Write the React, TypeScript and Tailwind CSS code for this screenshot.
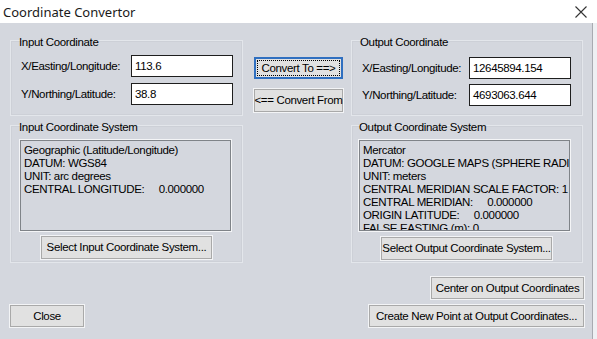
import type { ReactNode } from 'react'

const ui = "font-['Liberation_Sans',Arial,sans-serif] text-[11.5px] tracking-[-0.35px] leading-[13px] text-black"

function Button({ children, className, focused }: { children: ReactNode; className: string; focused?: boolean }) {
  if (focused) {
    return (
      <div className={`flex border-2 border-[#2f6fc0] bg-[#e1e1e1] p-[1px] ${className}`}>
        <div className="flex flex-1 items-center justify-center whitespace-nowrap outline-1 outline-dotted outline-black -outline-offset-1">
          {children}
        </div>
      </div>
    )
  }
  return (
    <div
      className={`flex items-center justify-center whitespace-nowrap border border-[#a9a9a9] bg-[#e1e1e1] shadow-[0_0_0_1px_#f3f4f6] ${className}`}
    >
      {children}
    </div>
  )
}

function GroupBox({ label, className, labelClass, children }: { label: string; className: string; labelClass: string; children: ReactNode }) {
  return (
    <div className={`flex flex-col border border-[#e3e6eb] shadow-[inset_0_0_0_1px_#cdd0d7] ${className}`}>
      <div className={`-mt-[5px] h-[13px] ${labelClass}`}>{label}</div>
      {children}
    </div>
  )
}

function Field({ label, value, labelWidth }: { label: string; value: string; labelWidth: string }) {
  return (
    <div className="flex items-center">
      <div className={`whitespace-nowrap ${labelWidth}`}>{label}</div>
      <div className="flex h-[22px] w-[102px] items-center border border-[#1e1e1e] bg-white pl-[3px]">{value}</div>
    </div>
  )
}

function ListBox({ lines, className }: { lines: string[]; className: string }) {
  return (
    <div
      className={`h-[91px] w-[211px] overflow-hidden border border-[#7f8388] bg-[#d4d7de] pl-[3px] pt-[3px] shadow-[0_0_0_1px_#f4f5f7] ${className}`}
    >
      {lines.map((l) => (
        <div key={l} className="whitespace-pre">
          {l}
        </div>
      ))}
    </div>
  )
}

export default function App() {
  return (
    <div className="flex h-[339px] w-[597px] flex-col overflow-hidden bg-[#eef0f3]">
      {/* title bar */}
      <div className="flex h-[23px] w-[597px] items-center justify-between bg-white pl-[3px] pr-[10px]">
        <span className="font-['Noto_Sans',sans-serif] text-[13px] leading-[16px] text-[#1a1a1a]">Coordinate Convertor</span>
        <svg width="12" height="12" viewBox="0 0 12 12" className="mt-[1px]">
          <path d="M0.5 0.5 L11.5 11.5 M11.5 0.5 L0.5 11.5" stroke="#333" strokeWidth="1.1" fill="none" />
        </svg>
      </div>

      {/* dialog body */}
      <div className={`flex h-[316px] w-[593px] flex-col border-r border-[#a8abb1] bg-[#d4d7de] pl-[10px] pt-[17px] ${ui}`}>
        <div className="flex items-start">
          <GroupBox label="Input Coordinate" className="h-[76px] w-[233px]" labelClass="ml-[8px]">
            <div className="ml-[10px] mt-[6px] flex flex-col gap-[6px]">
              <Field label="X/Easting/Longitude:" value="113.6" labelWidth="w-[110px]" />
              <Field label="Y/Northing/Latitude:" value="38.8" labelWidth="w-[110px]" />
            </div>
          </GroupBox>

          <div className="ml-[11px] mt-[17px] flex w-[89px] flex-col">
            <Button focused className="h-[22px] w-[89px]">Convert To ==&gt;</Button>
            <Button className="mt-[10px] h-[23px] w-[89px]">&lt;== Convert From</Button>
          </div>

          <GroupBox label="Output Coordinate" className="ml-[8px] h-[76px] w-[232px]" labelClass="ml-[8px]">
            <div className="ml-[10px] mt-[8px] flex flex-col gap-[5px]">
              <Field label="X/Easting/Longitude:" value="12645894.154" labelWidth="w-[107px]" />
              <Field label="Y/Northing/Latitude:" value="4693063.644" labelWidth="w-[107px]" />
            </div>
          </GroupBox>
        </div>

        <div className="mt-[9px] flex items-start">
          <GroupBox label="Input Coordinate System" className="h-[138px] w-[233px]" labelClass="ml-[8px]">
            <ListBox
              className="ml-[9px] mt-[6px]"
              lines={['Geographic (Latitude/Longitude)', 'DATUM: WGS84', 'UNIT: arc degrees', 'CENTRAL LONGITUDE:     0.000000']}
            />
            <Button className="ml-[30px] mt-[5px] h-[23px] w-[171px]">Select Input Coordinate System...</Button>
          </GroupBox>

          <GroupBox label="Output Coordinate System" className="ml-[108px] h-[138px] w-[232px]" labelClass="ml-[7px]">
            <ListBox
              className="ml-[7px] mt-[6px]"
              lines={[
                'Mercator',
                'DATUM: GOOGLE MAPS (SPHERE RADIUS: 6378137)',
                'UNIT: meters',
                'CENTRAL MERIDIAN SCALE FACTOR: 1',
                'CENTRAL MERIDIAN:     0.000000',
                'ORIGIN LATITUDE:     0.000000',
                'FALSE EASTING (m): 0',
              ]}
            />
            <Button className="ml-[29px] mt-[6px] h-[23px] w-[171px]">Select Output Coordinate System...</Button>
          </GroupBox>
        </div>

        <div className="mt-[14px] flex justify-end pr-[8px]">
          <Button className="h-[22px] w-[153px]">Center on Output Coordinates</Button>
        </div>

        <div className="mt-[6px] flex items-center justify-between pr-[8px]">
          <Button className="h-[22px] w-[74px]">Close</Button>
          <Button className="h-[22px] w-[215px]">Create New Point at Output Coordinates...</Button>
        </div>
      </div>
    </div>
  )
}
